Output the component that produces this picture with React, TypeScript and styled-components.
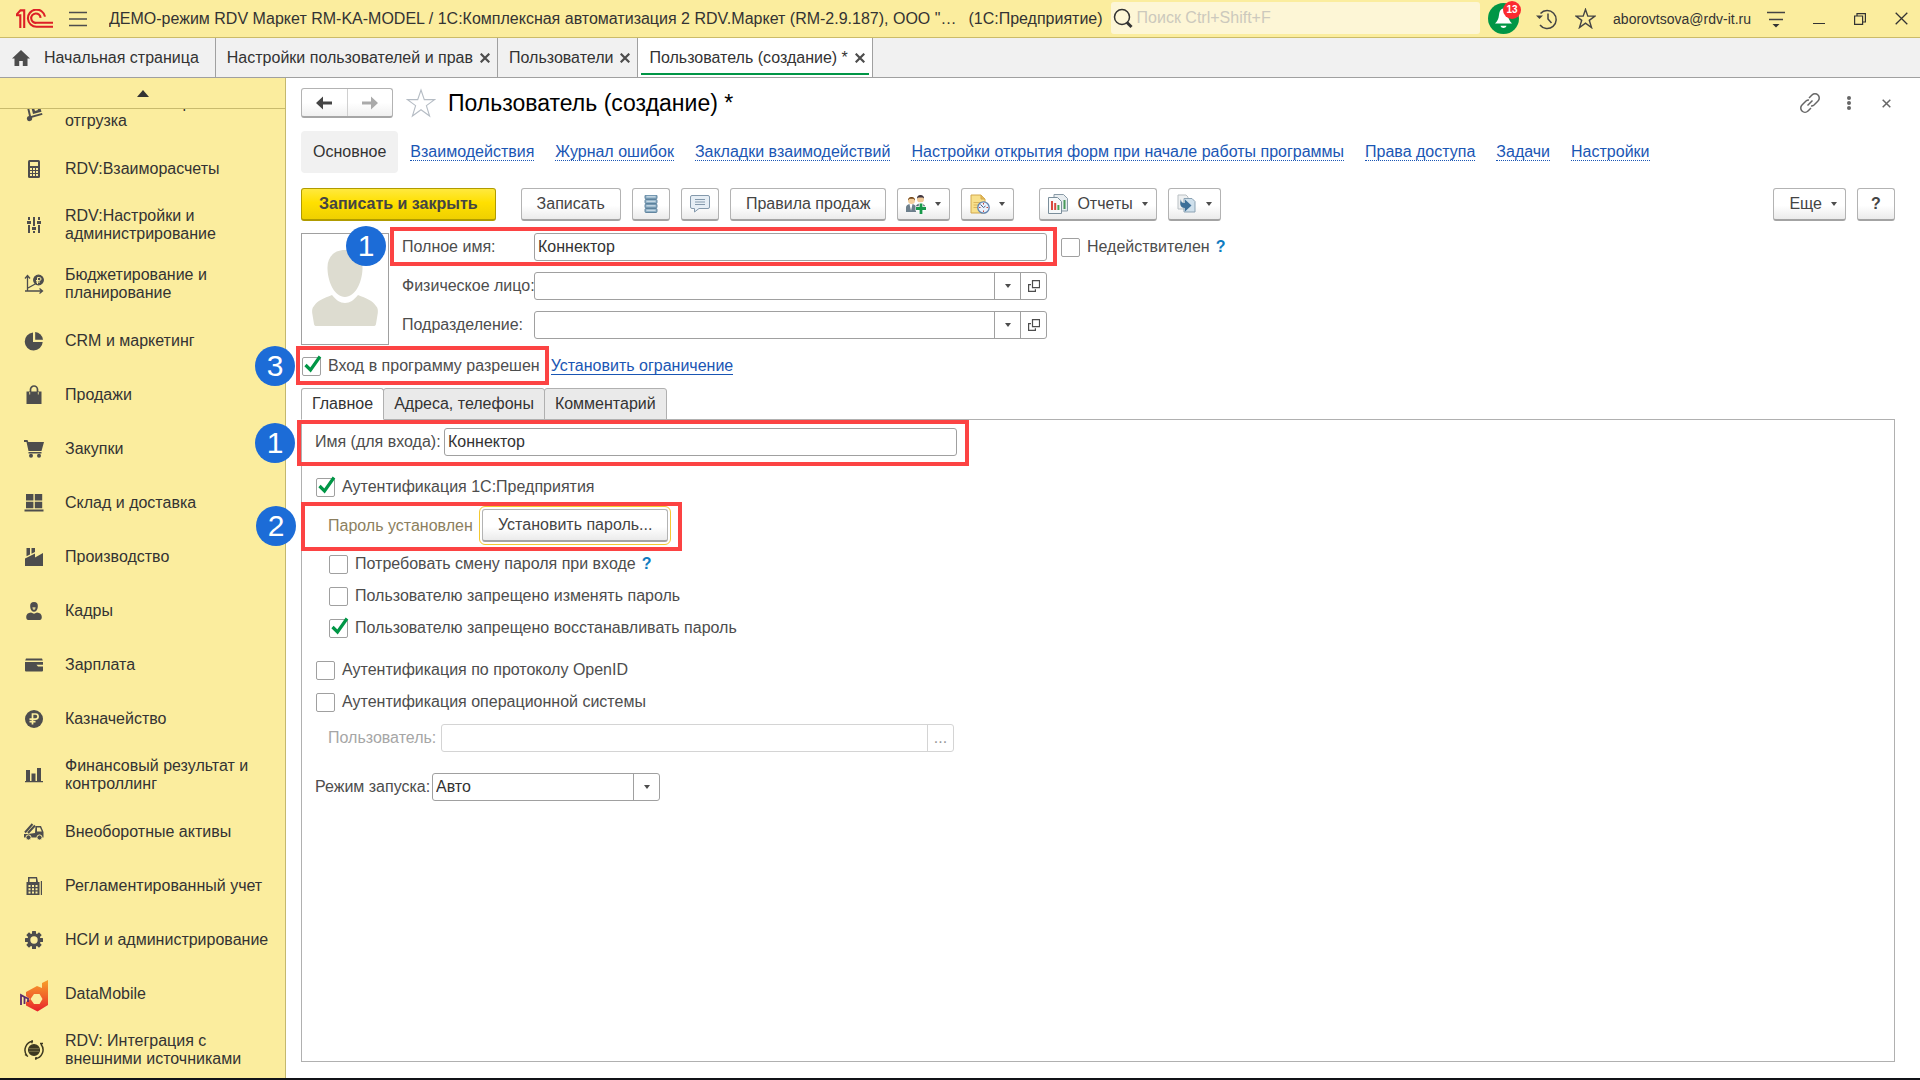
import React from 'react';
import styled, { createGlobalStyle, css } from 'styled-components';

const GlobalStyle = createGlobalStyle`
  *, *::before, *::after { box-sizing: border-box; }
  body { margin: 0; background: #fff; }
  body, button, input, select {
    font-family: 'Liberation Sans', Arial, sans-serif;
    font-size: 16px;
    line-height: 18px;
    color: #333;
  }
  button { padding: 0; border: 0; background: none; cursor: pointer; }
  svg { display: block; flex: none; }
`;

const ink = '#4d4d4d';
const yellow = '#fbed9e';
const green = '#009646';

/* ---------- page frame ---------- */

const Page = styled.div`
  display: flex;
  flex-direction: column;
  height: 100vh;
  border-bottom: 2px solid #111318;
  overflow: hidden;
`;

const Header = styled.header`
  display: flex;
  align-items: center;
  flex: none;
  height: 38px;
  padding: 0 12px 0 16px;
  background: ${yellow};
  border-bottom: 1px solid #cbbb69;
  white-space: nowrap;
`;

const MenuButton = styled.button`
  margin: 0 22px 0 16px;
`;

const AppTitle = styled.div`
  min-width: 0;
  overflow: hidden;
  text-overflow: ellipsis;
`;

const Platform = styled.div`
  margin: 0 8px 0 12px;
`;

const SearchBox = styled.label`
  display: flex;
  align-items: center;
  flex: 1;
  gap: 3px;
  height: 32px;
  padding-left: 2px;
  margin-bottom: 1px;
  border-radius: 3px;
  background: #fdf6d6;
`;

const SearchInput = styled.input`
  flex: 1;
  min-width: 0;
  padding: 0;
  border: 0;
  outline: 0;
  background: transparent;
  &::placeholder { color: #ccc9bd; opacity: 1; }
`;

const HeaderTools = styled.div`
  display: flex;
  align-items: center;
  gap: 17px;
  margin: 0 28px 0 8px;
`;

const Bell = styled.button`
  position: relative;
`;

const Badge = styled.span`
  position: absolute;
  top: -2px;
  right: -2px;
  width: 18px;
  height: 18px;
  border-radius: 50%;
  background: #fb2b30;
  color: #fff;
  font-size: 10px;
  font-weight: bold;
  text-align: center;
`;

const Account = styled.button`
  display: flex;
  align-items: center;
  gap: 16px;
  font-size: 14px;
`;

const WindowTools = styled.div`
  display: flex;
  align-items: center;
  gap: 29px;
`;

const WindowTabs = styled.nav`
  display: flex;
  flex: none;
  height: 40px;
  background: #f1f1f1;
  border-bottom: 1px solid #a0a0a0;
`;

const WindowTab = styled.div<{ $active?: boolean; $home?: boolean }>`
  display: flex;
  align-items: center;
  gap: 7px;
  padding: 0 7px 0 11px;
  border-right: 1px solid #a0a0a0;
  white-space: nowrap;
  ${p => p.$home && css`gap: 14px; padding: 0 16px 0 12px;`}
  ${p => p.$active && css`
    background:
      linear-gradient(${green}, ${green}) 3px 35px / calc(100% - 6px) 2px no-repeat,
      #fff;
  `}
`;

const Body = styled.div`
  display: flex;
  flex: 1;
  min-height: 0;
`;

/* ---------- sidebar ---------- */

const Sidebar = styled.aside`
  display: flex;
  flex-direction: column;
  flex: none;
  width: 286px;
  background: ${yellow};
  border-right: 1px solid #c4b86f;
`;

const ScrollUp = styled.button`
  display: grid;
  place-items: center;
  flex: none;
  height: 31px;
  border-bottom: 1px solid #c9bb6d;
`;

const Sections = styled.div`
  flex: 1;
  min-height: 0;
  overflow: hidden;
`;

const SectionList = styled.ul`
  margin: -27px 0 0;
  padding: 0;
  list-style: none;
`;

const Section = styled.li`
  display: flex;
  align-items: center;
  gap: 17px;
  min-height: 54px;
  padding: 12px 10px 11px 20px;
`;

const SectionIcon = styled.span`
  display: grid;
  place-items: center;
  flex: none;
  width: 28px;
  height: 28px;
  margin: -5px 0;
`;

const SectionLink = styled.a`
  color: #333;
  text-decoration: none;
  white-space: pre;
`;

/* ---------- form ---------- */

const Main = styled.main`
  display: flex;
  flex-direction: column;
  flex: 1;
  min-width: 0;
  padding: 10px 25px 16px 15px;
`;

const TitleRow = styled.div`
  display: flex;
  align-items: center;
  height: 30px;
`;

const History = styled.div`
  display: flex;
  width: 92px;
  height: 30px;
  margin-right: 13px;
  border: 1px solid #b3b3b3;
  border-bottom: 2px solid #a6a6a6;
  border-radius: 3px;
  background: linear-gradient(#fff 50%, #f0f0f0);
`;

const HistoryButton = styled.button`
  display: grid;
  place-items: center;
  flex: 1;
  & + & { border-left: 1px solid #d0d0d0; }
`;

const Title = styled.h1`
  flex: 1;
  margin: 0 0 0 12px;
  color: #000;
  font-size: 23px;
  font-weight: normal;
  line-height: 30px;
`;

const TitleTools = styled.div`
  display: flex;
  align-items: center;
  gap: 27px;
`;

const CloseForm = styled.button`
  display: grid;
  place-items: center;
  width: 17px;
`;

const FormNav = styled.nav`
  display: flex;
  align-items: center;
  gap: 21px;
  height: 42px;
  margin-top: 13px;
  white-space: nowrap;
`;

const CurrentPage = styled.span`
  padding: 12px;
  margin-right: -9px;
  border-radius: 4px;
  background: #f1f1f1;
`;

const NavLink = styled.a`
  color: #1a56b4;
  line-height: 17px;
  text-decoration: none;
  border-bottom: 1px dotted #1a56b4;
`;

const Toolbar = styled.div`
  display: flex;
  gap: 25px;
  height: 33px;
  margin-top: 15px;
`;

const ButtonGroup = styled.div<{ $end?: boolean }>`
  display: flex;
  gap: 11px;
  ${p => p.$end && css`margin-left: auto;`}
`;

const ToolButton = styled.button<{ $primary?: boolean; $icon?: boolean; $menu?: boolean }>`
  display: flex;
  align-items: center;
  justify-content: center;
  gap: 9px;
  height: 33px;
  min-width: 38px;
  padding: 0 ${p => (p.$icon ? 8 : 15)}px;
  border: 1px solid #b3b3b3;
  border-bottom: 2px solid #a3a3a3;
  border-radius: 3px;
  background: linear-gradient(#fff 55%, #ebebeb);
  color: #444;
  white-space: nowrap;
  ${p => p.$menu && css`padding: 0 8px 0 15px;`}
  ${p => p.$primary && css`
    padding: 0 17px;
    border-color: #b09b00;
    background: linear-gradient(#ffe93e, #ffe000 45%, #efd000);
    font-weight: bold;
  `}
`;

const Card = styled.section`
  display: flex;
  gap: 13px;
  margin-top: 12px;
`;

const Photo = styled.div`
  display: grid;
  place-items: center;
  position: relative;
  flex: none;
  width: 88px;
  height: 112px;
  border: 1px solid #a0a0a0;
`;

const Fields = styled.div`
  display: flex;
  flex-direction: column;
  gap: 11px;
  flex: 1;
  min-width: 0;
`;

const FieldRow = styled.div`
  display: flex;
  align-items: center;
  gap: 14px;
`;

const Marked = styled.div`
  display: flex;
  align-items: center;
  position: relative;
  min-width: 0;
`;

const Label = styled.label<{ $width?: number; $tone?: string; $indent?: boolean }>`
  flex: none;
  width: ${p => (p.$width ? `${p.$width}px` : 'auto')};
  padding-left: ${p => (p.$indent ? 13 : 0)}px;
  color: ${p => p.$tone ?? ink};
  white-space: nowrap;
`;

const Box = styled.div<{ $width: number; $disabled?: boolean }>`
  display: flex;
  flex: 0 1 ${p => p.$width}px;
  width: ${p => p.$width}px;
  min-width: 0;
  height: 28px;
  border: 1px solid ${p => (p.$disabled ? '#d4d4d4' : '#a0a0a0')};
  border-radius: 3px;
  background: #fff;
`;

const controlText = css`
  flex: 1;
  min-width: 0;
  padding: 0 3px;
  border: 0;
  outline: 0;
  background: transparent;
`;

const TextInput = styled.input`${controlText}`;
const Select = styled.select`
  ${controlText}
  appearance: none;
`;

const BoxButton = styled.button<{ $disabled?: boolean }>`
  display: grid;
  place-items: center;
  flex: none;
  width: 26px;
  border-left: 1px solid ${p => (p.$disabled ? '#d4d4d4' : '#a0a0a0')};
  color: ${p => (p.$disabled ? '#999' : ink)};
`;

const CheckRow = styled.label<{ $indent?: number }>`
  display: inline-flex;
  align-items: center;
  gap: 7px;
  height: 20px;
  margin-left: ${p => p.$indent ?? 0}px;
  color: ${ink};
  white-space: nowrap;
`;

const CheckCell = styled.span`
  display: grid;
  width: 19px;
  height: 19px;
  & > * { grid-area: 1 / 1; }
  svg { overflow: visible; pointer-events: none; }
`;

const CheckInput = styled.input`
  appearance: none;
  width: 19px;
  height: 19px;
  margin: 0;
  border: 1px solid #a0a0a0;
  border-radius: 2px;
  background: #fff;
`;

const Hint = styled.button`
  margin-left: -8px;
  color: #0f7bc0;
  font-weight: bold;
`;

const LoginRow = styled.div`
  display: flex;
  align-items: center;
  gap: 11px;
  height: 20px;
  margin-top: 11px;
`;

const RestrictLink = styled.a`
  color: #1a56b4;
  line-height: 17px;
  text-decoration: none;
  border-bottom: 1px solid #1a56b4;
`;

const PageTabs = styled.div`
  display: flex;
  margin-top: 12px;
`;

const PageTab = styled.button<{ $active?: boolean }>`
  height: 32px;
  padding: 0 10px;
  margin: 0 -1px -1px 0;
  border: 1px solid #b0b0b0;
  border-radius: 3px 3px 0 0;
  background: #eaeaea;
  ${p => p.$active && css`
    z-index: 1;
    border-bottom-color: #fff;
    background: #fff;
  `}
`;

const Panel = styled.section`
  display: flex;
  flex-direction: column;
  align-items: flex-start;
  gap: 12px;
  flex: 1;
  padding: 8px 13px;
  border: 1px solid #b0b0b0;
`;

const Group = styled.div<{ $top?: number }>`
  display: flex;
  flex-direction: column;
  align-items: flex-start;
  gap: 12px;
  margin-top: ${p => p.$top ?? 0}px;
`;

const PasswordButton = styled(ToolButton)`
  outline: 1px solid #f4c930;
  outline-offset: 2px;
`;

/* ---------- instruction marks laid over the form ---------- */

const Frame = styled.span<{ $inset: string }>`
  position: absolute;
  inset: ${p => p.$inset};
  border: 4px solid #fc4343;
  pointer-events: none;
  z-index: 2;
`;

const Step = styled.span<{ $left: number; $top: number }>`
  position: absolute;
  left: ${p => p.$left}px;
  top: ${p => p.$top}px;
  width: 40px;
  height: 40px;
  border-radius: 50%;
  background: #1c6cd7;
  color: #fff;
  font-size: 30px;
  line-height: 40px;
  text-align: center;
  z-index: 3;
`;

/* ---------- drawings ---------- */

const Svg = ({ w = 20, h = 20, children, ...rest }: any) => (
  <svg width={w} height={h} viewBox={`0 0 ${w} ${h}`} fill={ink} aria-hidden="true" {...rest}>{children}</svg>
);

const Caret = () => <Svg w={6} h={4}><path d="M0 0h6L3 4z" /></Svg>;

const Cross = ({ size = 10, stroke = 2.2, color = ink }: { size?: number; stroke?: number; color?: string }) => (
  <Svg w={size} h={size} stroke={color} strokeWidth={stroke}>
    <path d={`M.7 .7L${size - 0.7} ${size - 0.7}M${size - 0.7} .7L.7 ${size - 0.7}`} />
  </Svg>
);

const Logo = () => (
  <Svg w={37} h={19} fill="none" stroke="#dd1f26" strokeWidth="2.1">
    <path d="M0 6.200h4.300V19M.6 5.600L4.500 1.400h3.700V19" />
    <path d="M29 7.600A8.600 8.600 0 1 0 20.600 17.800H37" />
    <path d="M24.600 8.800A4.700 4.700 0 1 0 20.500 13.800H37" />
  </Svg>
);

const StarShape = ({ size, color, stroke }: { size: number; color: string; stroke: number }) => (
  <svg width={size} height={size} viewBox="0 0 30 30" fill="none" stroke={color} strokeWidth={stroke} aria-hidden="true">
    <path d="M15 2l3.300 9.600H28.500L20.400 17.600 23.600 28 15 21.700 6.400 28 9.600 17.600 1.500 11.600H11.700z" />
  </svg>
);

const Tick = () => (
  <Svg w={19} h={19} fill="none" stroke={green} strokeWidth="3.2"><path d="M3.500 8l5 5L18 -.5" /></Svg>
);

const OpenForm = () => (
  <Svg w={12} h={12} fill="none" stroke={ink} strokeWidth="1.2">
    <path d="M4.500 .6h7v7h-7zM3 4.600H.6v6.800h6.800V9.200" />
  </Svg>
);

const icons: Record<string, React.ReactNode> = {
  trolley: (
    <Svg><path d="M1 1l3 0 3 13 11-3 .5 1.800-10.500 3A2.600 2.600 0 1 1 5 14L2.500 3z" /><path d="M7 4l8-2.300 2.500 8L9 12z" /><path d="M10 6l3-1 1 3-3 1z" fill={yellow} /></Svg>
  ),
  calc: (
    <Svg>
      <rect x="4" y="1" width="12" height="18" rx="1.500" />
      <path fill={yellow} d="M6 3h8v4H6zM6 9h2v2H6zM9 9h2v2H9zM12 9h2v2h-2zM6 12h2v2H6zM9 12h2v2H9zM12 12h2v2h-2zM6 15h2v2H6zM9 15h2v2H9zM12 15h2v2h-2z" />
    </Svg>
  ),
  sliders: (
    <Svg><path d="M4 2h2v3H4zM3 6h4v3H3zM4 10h2v8H4zM9 2h2v9H9zM8 12h4v3H8zM9 16h2v2H9zM14 2h2v3h-2zM13 6h4v3h-4zM14 10h2v8h-2z" /></Svg>
  ),
  budget: (
    <Svg fill="none" stroke={ink} strokeWidth="1.3">
      <path d="M3.500 17V2M1 4.500L3.500 1.500 6 4.500M1 17h17M15.500 14.500L18.500 17l-3 2.500M4 14l9-5" />
      <circle cx="14.500" cy="6" r="4.800" fill={ink} />
      <path stroke={yellow} strokeWidth="1" d="M13.500 10V3.500h2a1.400 1.400 0 0 1 0 3H12M12 8h4" />
    </Svg>
  ),
  pie: <Svg><path d="M9 1.500V11l9.700 0A9 9 0 1 1 9 1.500z" /><path d="M11.200 1a8.500 8.500 0 0 1 7.800 7.800h-7.800z" /></Svg>,
  bag: <Svg><path d="M2.500 6.500h15V19h-15z" /><path d="M6.500 9V4.500a3.500 3.500 0 0 1 7 0V9" fill="none" stroke={ink} strokeWidth="1.700" /><path d="M5.700 7v2.500M14.300 7v2.500" stroke={yellow} strokeWidth=".8" /></Svg>,
  cart: <Svg><path d="M0 1h3.500l.8 2H20l-2.500 9H4.500L2.500 3H0zM4.500 13h13v1.500h-13z" /><circle cx="7" cy="16.800" r="2" /><circle cx="15" cy="16.800" r="2" /></Svg>,
  boxes: <Svg><path d="M2 1h7.400v6.500H2zM10.800 1h7.400v6.500h-7.400zM2 8.800h7.400v6.500H2zM10.800 8.800h7.400v6.500h-7.400zM.5 16.500h19v2H.5z" /></Svg>,
  factory: <Svg><path d="M1 19v-7.500L11 6.500v4L19 6v13z" /><path d="M2.500 1H6v6.500L2.500 9.300zM7.500 1H11v4L7.500 6.800z" /></Svg>,
  person: <Svg><path d="M10 1c2.800 0 4.200 1.800 3.800 5-.3 2.800-1.800 4.800-3.800 4.800S6.500 8.800 6.200 6C5.800 2.800 7.200 1 10 1zM7 11.500l3 1.300 3-1.300c3 .4 4.800 1.700 4.800 4.500 0 2-.8 3-2 3H4.200c-1.200 0-2-1-2-3 0-2.800 1.800-4.100 4.800-4.500z" /><path d="M8.400 6.200h3.200l-.4 2.100-1.200.8-1.200-.8z" fill={yellow} opacity=".8" /></Svg>,
  wallet: <Svg><path d="M2 3.500h16l.8 2H1.200zM1 7h18v8.500a1 1 0 0 1-1 1H2a1 1 0 0 1-1-1z" /><path d="M12.500 9.800H19v1.700h-5z" fill={yellow} /></Svg>,
  ruble: <Svg><circle cx="10" cy="10" r="9" /><path d="M8.500 15.500V5h3a2.600 2.600 0 0 1 0 5.200H5.500M5.500 12.700h6" fill="none" stroke={yellow} strokeWidth="1.700" /></Svg>,
  bars: <Svg><path d="M2 5h4v11H2zM7.500 8.500h4V16h-4zM13 3h4v13h-4zM1 16h18v1.200H1z" /></Svg>,
  truck: (
    <Svg><path d="M0 12h4l7-1 .5-7H17l2.500 6v5.500H0z" /><path d="M13 5.500h3l1.800 4H13z" fill={yellow} /><path d="M1 10.500L8.500 2M4 11l7-7.500" stroke={ink} strokeWidth="2" /><g stroke={yellow}><circle cx="4.500" cy="15.500" r="2.600" /><circle cx="15.500" cy="15.500" r="2.600" /></g></Svg>
  ),
  register: (
    <Svg><path d="M4 1h9l1 5h1.500v13H2.500V6H4z" /><path d="M16.800 5H18v14h-1.200z" /><path fill={yellow} d="M5.500 2.500h6.500V6H5.500zM4.500 9h2v2h-2zM8 9h2v2H8zM11.500 9h2v2h-2zM4.500 12.200h2v2h-2zM8 12.200h2v2H8zM11.500 12.200h2v2h-2zM4.500 15.500h2v2h-2zM8 15.500h2v2H8zM11.500 15.500h2v2h-2z" /></Svg>
  ),
  gear: (
    <Svg>
      {[0, 45, 90, 135].map(a => <rect key={a} x="8" y="1" width="4" height="18" rx=".5" transform={`rotate(${a} 10 10)`} />)}
      <circle cx="10" cy="10" r="6.700" /><circle cx="10" cy="10" r="3.700" fill={yellow} />
    </Svg>
  ),
  datamobile: (
    <Svg w={28} h={32}>
      <defs><linearGradient id="dm" x1="0" y1="0" x2="0" y2="1"><stop offset="0" stopColor="#f7a02b" /><stop offset=".55" stopColor="#f0602a" /><stop offset="1" stopColor="#e8202c" /></linearGradient></defs>
      <path fill="url(#dm)" fillRule="evenodd" d="M28 0v25L17.500 31.500 6 25.500V22l4-3-4-3V12L17 6l5 2V3zM14 14l-3.500 5 3.500 5h5.500l3-5-3-5z" />
      <path fill="none" stroke="#5b2a6b" strokeWidth="1.800" d="M1 25V15l3.500 2v7M4.500 17l3.500 1.500V22" />
    </Svg>
  ),
  exchange: (
    <Svg fill="none" stroke="#3d3922" strokeWidth="1.500">
      <circle cx="10" cy="10" r="5.300" fill="#3d3922" />
      <path d="M5 8.700h10M5 11.300h10" stroke="#8d8455" strokeWidth=".8" />
      <path d="M9 1.200A9 9 0 0 0 3 15.800M11 18.800A9 9 0 0 0 17 4.200M1 14.500l3 2M8 .2v3M12 17v3M16 3.500h3" />
    </Svg>
  ),
};

const sections: [string, string][] = [
  ['trolley', 'RDV:Заказы и приемка и\nотгрузка'],
  ['calc', 'RDV:Взаиморасчеты'],
  ['sliders', 'RDV:Настройки и\nадминистрирование'],
  ['budget', 'Бюджетирование и\nпланирование'],
  ['pie', 'CRM и маркетинг'],
  ['bag', 'Продажи'],
  ['cart', 'Закупки'],
  ['boxes', 'Склад и доставка'],
  ['factory', 'Производство'],
  ['person', 'Кадры'],
  ['wallet', 'Зарплата'],
  ['ruble', 'Казначейство'],
  ['bars', 'Финансовый результат и\nконтроллинг'],
  ['truck', 'Внеоборотные активы'],
  ['register', 'Регламентированный учет'],
  ['gear', 'НСИ и администрирование'],
  ['datamobile', 'DataMobile'],
  ['exchange', 'RDV: Интеграция с\nвнешними источниками'],
];

const formLinks = [
  'Взаимодействия', 'Журнал ошибок', 'Закладки взаимодействий',
  'Настройки открытия форм при начале работы программы', 'Права доступа', 'Задачи', 'Настройки',
];

/* ---------- parts ---------- */

const Check = ({ label, checked, indent }: { label: string; checked?: boolean; indent?: number }) => (
  <CheckRow $indent={indent}>
    <CheckCell>
      <CheckInput type="checkbox" defaultChecked={checked} />
      {checked && <Tick />}
    </CheckCell>
    {label}
  </CheckRow>
);

const Lookup = ({ id, label }: { id: string; label: string }) => (
  <FieldRow>
    <Marked>
      <Label htmlFor={id} $width={132}>{label}</Label>
      <Box $width={513}>
        <TextInput id={id} />
        <BoxButton aria-label="Выбрать"><Caret /></BoxButton>
        <BoxButton aria-label="Открыть"><OpenForm /></BoxButton>
      </Box>
    </Marked>
  </FieldRow>
);

const TopBar = () => (
  <Header>
    <Logo />
    <MenuButton aria-label="Меню">
      <Svg w={18} h={16} stroke={ink} strokeWidth="1.500"><path d="M0 1.500h18M0 8h18M0 14.500h18" /></Svg>
    </MenuButton>
    <AppTitle>ДЕМО-режим RDV Маркет RM-KA-MODEL / 1С:Комплексная автоматизация 2 RDV.Маркет (RM-2.9.187), ООО "…</AppTitle>
    <Platform>(1С:Предприятие)</Platform>
    <SearchBox>
      <Svg w={21} h={21} fill="none" stroke="#333">
        <circle cx="9" cy="9" r="7.500" strokeWidth="1.500" /><path d="M14 14.500l4.500 4.500" strokeWidth="3" />
      </Svg>
      <SearchInput type="search" aria-label="Поиск" placeholder="Поиск Ctrl+Shift+F" />
    </SearchBox>
    <HeaderTools>
      <Bell aria-label="Оповещения">
        <Svg w={31} h={31}>
          <circle cx="15.500" cy="15.500" r="15.500" fill={green} />
          <path fill="#fff" d="M15.500 5.500c3.500.500 4 3.500 4.500 6.500.5 4 1.500 6 4 8.500H7c2.500-2.500 3.500-4.500 4-8.500.5-3 1-6 4.500-6.500zM12.500 22.700h6c-.8 3-5.200 3-6 0z" />
        </Svg>
        <Badge>13</Badge>
      </Bell>
      <button aria-label="История">
        <Svg w={22} h={22} fill="none" stroke="#444" strokeWidth="1.500">
          <path d="M4.500 5.500A9 9 0 1 1 4 17M12 5.500V11l3.500 4" /><path d="M0 7.500h7L3.500 11z" fill="#444" stroke="none" />
        </Svg>
      </button>
      <button aria-label="Избранное"><StarShape size={21} color="#444" stroke={2} /></button>
      <Account>
        aborovtsova@rdv-it.ru
        <Svg w={18} h={18} stroke="#444" strokeWidth="1.500"><path d="M0 2.500h18M2 9.500h14" /><path d="M5.500 14h7L9 17.500z" fill="#333" stroke="none" /></Svg>
      </Account>
    </HeaderTools>
    <WindowTools>
      <button aria-label="Свернуть"><Svg w={12} h={12} stroke="#333"><path d="M0 10.500h12" /></Svg></button>
      <button aria-label="Развернуть"><Svg w={12} h={12} fill="none" stroke="#333" strokeWidth="1.200"><path d="M.6 3h8v8.400h-8zM3 3V.6h8.400V9H9" /></Svg></button>
      <button aria-label="Закрыть"><Cross size={13} stroke={1.3} color="#333" /></button>
    </WindowTools>
  </Header>
);

const OpenWindows = () => (
  <WindowTabs>
    <WindowTab $home>
      <Svg w={18} h={16}><path d="M9 0l9 8.500h-2.500V16h-4.700v-5H7.200v5H2.500V8.500H0z" /></Svg>
      Начальная страница
    </WindowTab>
    <WindowTab>Настройки пользователей и прав<button aria-label="Закрыть вкладку"><Cross /></button></WindowTab>
    <WindowTab>Пользователи<button aria-label="Закрыть вкладку"><Cross /></button></WindowTab>
    <WindowTab $active>Пользователь (создание) *<button aria-label="Закрыть вкладку"><Cross /></button></WindowTab>
  </WindowTabs>
);

const CommandBar = () => (
  <Toolbar>
    <ToolButton $primary>Записать и закрыть</ToolButton>
    <ButtonGroup>
      <ToolButton>Записать</ToolButton>
      <ToolButton $icon aria-label="Показать в списке">
        <Svg w={14} h={18}>
          {[0, 4.5, 9, 13.5].map(y => <g key={y}><rect x="1" y={y} width="12" height="4" rx="1" fill="#8fb0c6" stroke="#587d98" strokeWidth=".9" /><path d="M2.500 1.800h9" transform={`translate(0 ${y})`} stroke="#d5e3ec" /></g>)}
        </Svg>
      </ToolButton>
      <ToolButton $icon aria-label="Обсуждение">
        <Svg w={20} h={18} fill="#e6eef5" stroke="#8499ac">
          <path d="M2 .5h16a1.500 1.500 0 0 1 1.500 1.500v10a1.500 1.500 0 0 1-1.500 1.500H9L4.500 17v-3.500H2A1.500 1.500 0 0 1 .5 12V2A1.500 1.500 0 0 1 2 .5z" /><path d="M5 4.500h10M5 7h10M5 9.500h10" />
        </Svg>
      </ToolButton>
      <ToolButton>Правила продаж</ToolButton>
      <ToolButton $icon aria-label="Контакты">
        <Svg w={20} h={20}>
          <path d="M9.500 16v-2c0-3 2-4.500 5-4.500s5 1.500 5 4.500v2z" fill="#5c6675" /><circle cx="14.500" cy="5" r="3.500" fill="#f0c998" /><path d="M11 4.500a3.500 3.500 0 0 1 7 0l-1.500-1h-4z" fill="#3f3540" />
          <path d="M0 18v-4c0-3 2-4 5-4s5 1 5 4v4z" fill="#6d7f8c" /><path d="M3.500 10L5 17l1.500-7z" fill="#fff" /><circle cx="5.500" cy="6.500" r="3.500" fill="#f3cf9d" /><path d="M2 6.500a3.500 3.500 0 0 1 7 0l-1.500-1.700h-4z" fill="#6a3f14" />
          <path d="M15 8.500v11.500M9.500 14.500H20.500" stroke="#fff" strokeWidth="4.500" />
          <path d="M15 9.500v10.500M10 14.500H20" stroke="#17984a" strokeWidth="2.800" />
        </Svg>
        <Caret />
      </ToolButton>
      <ToolButton $icon aria-label="Напоминание">
        <Svg w={20} h={20}>
          <path d="M1 1h10l4 4v14H1z" fill="#f8e08c" stroke="#d2a84c" /><path d="M11 1v4h4" fill="#e5b95a" stroke="#d2a84c" /><path d="M3.500 8.500h8M3.500 11h6M3.500 13.500h5" stroke="#dcb65d" />
          <circle cx="13.500" cy="13.500" r="5.700" fill="#e9f1fb" stroke="#5f83b0" strokeWidth="1.300" /><path d="M13.500 13.500L10.500 10.500M13.500 13.500l2-1.500" stroke="#44618a" /><path d="M13.500 9v1.500M13.500 16.500V18M9 13.500h1.500M16.500 13.500H18" stroke="#c8473d" />
        </Svg>
        <Caret />
      </ToolButton>
    </ButtonGroup>
    <ButtonGroup>
      <ToolButton $icon>
        <Svg w={20} h={20}>
          <path d="M6 .5h9.500l4 4V17H6z" fill="#e8edf0" stroke="#899aa6" /><path d="M16.500 6v9" stroke="#4a9a5b" strokeWidth="2" />
          <path d="M.5 3.500h9l4 4v12H.5z" fill="#f6f9fa" stroke="#7b8e9b" /><path d="M4 7v9" stroke="#d94a3e" strokeWidth="2" /><path d="M7.200 9v7" stroke="#d94a3e" strokeWidth="2" /><path d="M10.400 11v5" stroke="#43a556" strokeWidth="2" />
        </Svg>
        Отчеты <Caret />
      </ToolButton>
      <ToolButton $icon aria-label="Отправить">
        <Svg w={20} h={20}>
          <path d="M1 1h8l2 2v12H1z" fill="#eef0f1" stroke="#b9bfc3" /><path d="M7 4.500h8l3 3V18H7z" fill="#cfe0ec" stroke="#8ba2b3" />
          <path d="M4 5c0 3 1 4 4 4V5.500l6.500 6L8 17.500V14c-4 0-6-3-4-9z" fill="#3d6f98" />
        </Svg>
        <Caret />
      </ToolButton>
    </ButtonGroup>
    <ButtonGroup $end>
      <ToolButton $menu>Еще <Caret /></ToolButton>
      <ToolButton $icon aria-label="Справка"><b>?</b></ToolButton>
    </ButtonGroup>
  </Toolbar>
);

export default function App() {
  return (
    <Page>
      <GlobalStyle />
      <TopBar />
      <OpenWindows />
      <Body>
        <Sidebar>
          <ScrollUp aria-label="Прокрутить вверх"><Svg w={12} h={7} fill="#333"><path d="M6 0l6 7H0z" /></Svg></ScrollUp>
          <Sections>
            <SectionList>
              {sections.map(([icon, name]) => (
                <Section key={icon}>
                  <SectionIcon>{icons[icon]}</SectionIcon>
                  <SectionLink href="#">{name}</SectionLink>
                </Section>
              ))}
            </SectionList>
          </Sections>
        </Sidebar>
        <Main>
          <TitleRow>
            <History>
              <HistoryButton aria-label="Назад"><Svg w={16} h={14} fill="#444"><path d="M0 7l7-6.500V5.500h9v3H7v5z" /></Svg></HistoryButton>
              <HistoryButton aria-label="Вперед"><Svg w={16} h={14} fill="#aaa"><path d="M16 7l-7-6.500V5.500H0v3h9v5z" /></Svg></HistoryButton>
            </History>
            <StarShape size={30} color="#b5bcc4" stroke={1.1} />
            <Title>Пользователь (создание) *</Title>
            <TitleTools>
              <button aria-label="Получить ссылку">
                <Svg w={20} h={20} fill="none" stroke="#666" strokeWidth="1.500">
                  <path d="M9 5l3-3a4 4 0 0 1 6 6l-4 4a4 4 0 0 1-3 1M11 15l-3 3a4 4 0 0 1-6-6l4-4a4 4 0 0 1 3-1M7.500 12.500l5-5" />
                </Svg>
              </button>
              <button aria-label="Дополнительно"><Svg w={4} h={14} fill="#666"><circle cx="2" cy="2" r="2" /><circle cx="2" cy="7" r="2" /><circle cx="2" cy="12" r="2" /></Svg></button>
              <CloseForm aria-label="Закрыть форму"><Cross size={9} stroke={1.5} color="#666" /></CloseForm>
            </TitleTools>
          </TitleRow>

          <FormNav>
            <CurrentPage>Основное</CurrentPage>
            {formLinks.map(t => <NavLink key={t} href="#">{t}</NavLink>)}
          </FormNav>

          <CommandBar />

          <Card>
            <Photo>
              <Svg w={66} h={78} fill="#dddcd0">
                <path d="M33 0c12 0 18 8 17.500 19C50 33 43 47 33 47S16 33 15.500 19C15 8 21 0 33 0z" />
                <path d="M20 45c4 5 8 8 13 8s9-3 13-8c8 3 15 6 18 11 2 2 2 4 1.800 7L64 74c-.3 1.500-1 2-2.500 2h-57C3 76 2.300 75.500 2 74L.2 63C0 60 0 58 2 56c3-5 10-8 18-11z" />
              </Svg>
              <Step $left={44} $top={-8}>1</Step>
            </Photo>
            <Fields>
              <FieldRow>
                <Marked>
                  <Label htmlFor="full-name" $width={132}>Полное имя:</Label>
                  <Box $width={513}><TextInput id="full-name" defaultValue="Коннектор" /></Box>
                  <Frame $inset="-6px -10px -5px -12px" />
                </Marked>
                <Check label="Недействителен" />
                <Hint aria-label="Подсказка">?</Hint>
              </FieldRow>
              <Lookup id="person" label="Физическое лицо:" />
              <Lookup id="department" label="Подразделение:" />
            </Fields>
          </Card>

          <LoginRow>
            <Marked>
              <Check label="Вход в программу разрешен" checked indent={1} />
              <Frame $inset="-10px -9px -9px -5px" />
              <Step $left={-46} $top={-10}>3</Step>
            </Marked>
            <RestrictLink href="#">Установить ограничение</RestrictLink>
          </LoginRow>

          <PageTabs>
            <PageTab $active>Главное</PageTab>
            <PageTab>Адреса, телефоны</PageTab>
            <PageTab>Комментарий</PageTab>
          </PageTabs>
          <Panel>
            <Marked>
              <Label htmlFor="login" $width={129}>Имя (для входа):</Label>
              <Box $width={513}><TextInput id="login" defaultValue="Коннектор" /></Box>
              <Frame $inset="-8px -12px -10px -18px" />
              <Step $left={-60} $top={-5}>1</Step>
            </Marked>
            <Group $top={9}>
              <Check label="Аутентификация 1С:Предприятия" checked indent={1} />
              <Marked>
                <Label as="span" $width={167} $tone="#8c7f60" $indent>Пароль установлен</Label>
                <PasswordButton>Установить пароль...</PasswordButton>
                <Frame $inset="-7px -14px -9px -14px" />
                <Step $left={-59} $top={-3}>2</Step>
              </Marked>
              <FieldRow>
                <Check label="Потребовать смену пароля при входе" indent={14} />
                <Hint aria-label="Подсказка">?</Hint>
              </FieldRow>
              <Check label="Пользователю запрещено изменять пароль" indent={14} />
              <Check label="Пользователю запрещено восстанавливать пароль" checked indent={14} />
            </Group>
            <Group $top={10}>
              <Check label="Аутентификация по протоколу OpenID" indent={1} />
              <Check label="Аутентификация операционной системы" indent={1} />
              <Marked>
                <Label htmlFor="os-user" $width={126} $tone="#a6a6a6" $indent>Пользователь:</Label>
                <Box $width={513} $disabled>
                  <TextInput id="os-user" disabled />
                  <BoxButton $disabled disabled aria-label="Выбрать">...</BoxButton>
                </Box>
              </Marked>
            </Group>
            <Group $top={9}>
              <Marked>
                <Label htmlFor="mode" $width={117}>Режим запуска:</Label>
                <Box $width={228}>
                  <Select id="mode" defaultValue="Авто"><option>Авто</option></Select>
                  <BoxButton tabIndex={-1} aria-label="Выбрать"><Caret /></BoxButton>
                </Box>
              </Marked>
            </Group>
          </Panel>
        </Main>
      </Body>
    </Page>
  );
}
